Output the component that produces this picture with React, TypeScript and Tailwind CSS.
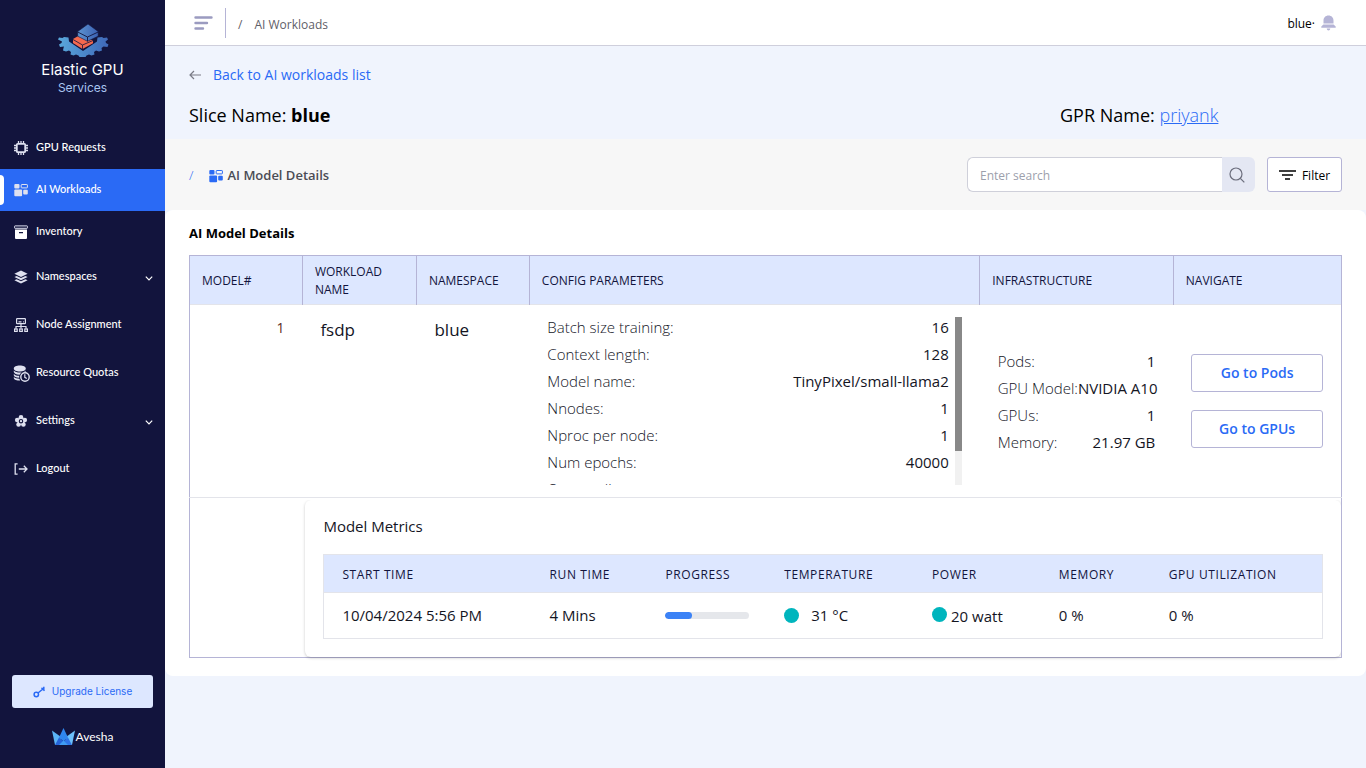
import type { ReactNode } from "react";

type NavItem = {
  label: string;
  icon: ReactNode;
  active?: boolean;
  expandable?: boolean;
  tall?: boolean;
};

function ChipIcon() {
  return (
    <svg viewBox="0 0 14 14" className="size-[14px]" fill="none" stroke="currentColor">
      <rect x="2.8" y="2.8" width="8.4" height="8.4" rx="1" strokeWidth="1.8" />
      <path d="M4.5 0v2.5M7 0v2.5M9.5 0v2.5M4.5 11.5V14M7 11.5V14M9.5 11.5V14M0 4.5h2.5M0 7h2.5M0 9.5h2.5M11.5 4.5H14M11.5 7H14M11.5 9.5H14" strokeWidth="1.3" />
    </svg>
  );
}

function WorkloadIcon({ className = "size-[14px]" }: { className?: string }) {
  return (
    <svg viewBox="0 0 14 14" className={className} fill="currentColor">
      <rect x="0.3" y="1" width="5.2" height="4.6" rx="1" />
      <rect x="7.2" y="1.5" width="6.2" height="3.4" rx="0.6" fill="none" stroke="currentColor" strokeWidth="1" />
      <rect x="0.3" y="6.6" width="7.8" height="6.6" rx="1" />
      <rect x="9.2" y="6.8" width="4.6" height="4.6" rx="1" />
    </svg>
  );
}

function ArchiveIcon() {
  return (
    <svg viewBox="0 0 14 14" className="size-[14px]" fill="currentColor">
      <rect x="0.5" y="0.9" width="13" height="2.4" rx="0.6" fill="none" stroke="currentColor" strokeWidth="1" />
      <path fill="#ffffff" fillRule="evenodd" d="M1 4.4h12V13a1 1 0 0 1-1 1H2a1 1 0 0 1-1-1zM5 7v1.2h4V7z" />
    </svg>
  );
}

function LayersIcon() {
  return (
    <svg viewBox="0 0 14 14" className="size-[14px]" fill="currentColor">
      <path d="M7 .6 13.6 3.8 7 7 .4 3.8z" />
      <path d="M.4 7 2.6 6 7 8.1 11.4 6 13.6 7 7 10.2z" />
      <path d="M.4 10.2 2.6 9.2 7 11.3 11.4 9.2 13.6 10.2 7 13.4z" />
    </svg>
  );
}

function NodesIcon() {
  return (
    <svg viewBox="0 0 14 14" className="size-[14px]" fill="none" stroke="currentColor" strokeWidth="1.2">
      <rect x="2.6" y="0.6" width="8.8" height="5" rx="0.6" />
      <path d="M4.5 3.8h3M9 3.8h.8M7 5.6v5M2 10.8V8.5h10v2.3" />
      <rect x="0.6" y="11" width="2.6" height="2.4" />
      <rect x="5.7" y="11" width="2.6" height="2.4" />
      <rect x="10.8" y="11" width="2.6" height="2.4" />
    </svg>
  );
}

function QuotaIcon() {
  return (
    <svg viewBox="0 0 17 17" className="size-[17px]" fill="currentColor">
      <path d="M.8 3.4C.8 1.6 3.4.4 6.8.4s6 1.2 6 3-2.6 3-6 3-6-1.2-6-3z" />
      <path d="M.8 5.4c1.2 1.5 3.4 2.1 6 2.1s4.800-.6 6-2.100v1.300c-3.200-.2-5.200 1-6.200 3-3.200 0-5.400-1-5.800-2.600z" />
      <path d="M.8 8.900c1.200 1.300 3 1.900 5.400 1.900v1.900C3.200 12.600 1 11.700.8 10.300z" />
      <path d="M.8 12c1.200 1 3 1.600 5.500 1.700l.9 1.800C3.600 15.500 1 14.600.8 13.200z" />
      <circle cx="12" cy="12" r="4.2" fill="none" stroke="currentColor" strokeWidth="1.4" />
      <path d="M11.8 9.3v3l2 1.3" fill="none" stroke="currentColor" strokeWidth="1.2" />
    </svg>
  );
}

function SettingsIcon() {
  return (
    <svg viewBox="0 0 14 14" className="size-[14px]" fill="currentColor">
      <circle cx="7" cy="3.2" r="2.3" />
      <circle cx="3.2" cy="6" r="2.3" />
      <circle cx="10.8" cy="6" r="2.3" />
      <circle cx="4.6" cy="10.4" r="2.3" />
      <circle cx="9.4" cy="10.4" r="2.3" />
      <circle cx="7" cy="7.2" r="3.4" />
      <circle cx="7" cy="7.2" r="1.7" fill="none" stroke="#12143d" strokeWidth="1.1" />
    </svg>
  );
}

function LogoutIcon() {
  return (
    <svg viewBox="0 0 14 14" className="size-[14px]" fill="none" stroke="currentColor" strokeWidth="1.3">
      <path d="M3.6 1.8H1.2v10.4h2.4M4.8 7h8M9.8 3.8 13 7l-3.2 3.2" />
    </svg>
  );
}

function ChevronIcon() {
  return (
    <svg viewBox="0 0 8 8" className="mt-[2px] size-2" fill="none" stroke="currentColor" strokeWidth="1.2">
      <path d="M.8 2.6 4 5.8l3.2-3.2" />
    </svg>
  );
}

function ElasticLogo() {
  return (
    <svg viewBox="0 0 52 34" className="h-[34px] w-[52px]">
      <defs>
        <linearGradient id="gear" x1="0" x2="1">
          <stop offset="0" stopColor="#5aa9dc" />
          <stop offset="1" stopColor="#3f68b8" />
        </linearGradient>
        <linearGradient id="slab" x1="0" x2="1">
          <stop offset="0" stopColor="#5d93d0" />
          <stop offset="1" stopColor="#3b62b3" />
        </linearGradient>
      </defs>
      <path
        fill="url(#gear)"
        d="M2 13.5 5.5 14 7 13l4.5.5.5 4L26 27l14-9.5.5-4L45 13l1.5 1 3.5-.5 1 2-2.5 2 .5 1.5 2.5 1.5-1 2.5-4-.5-2 1.5.5 2.5-3 1-3-1-2 1.5.5 2.5-3 1-2.5-1-2.5 1-1 1.5h-6l-1-1.5-2.5-1-2.5 1-3-1 .5-2.5-2-1.500-3 1-3-1 .500-2.500L7 22.500 3 23l-1-2.500L4.500 19l.500-1.500L1 15.500z"
      />
      <path fill="#f4694e" d="m16 15 7-4 13 5.500v2.700L25.500 25 16 19z" />
      <path fill="none" stroke="#12143d" strokeWidth=".8" d="m16 15.500 9.500 5.500L36 16.500M25.500 21v4" />
      <path fill="url(#slab)" stroke="#12143d" strokeWidth=".6" d="M31 0 20.700 7.500v4.700l9.800 5.100 10.700-5.100V7.500z" />
      <path fill="none" stroke="#12143d" strokeWidth=".9" d="m20.700 8 9.800 5 10.700-5M30.500 13v4.300" />
    </svg>
  );
}

function AveshaLogo() {
  return (
    <svg viewBox="0 0 23 17" className="h-[17px] w-[23px]">
      <path fill="#5ab4f6" d="M0 2.5 9 9l-1 8H3z" />
      <path fill="#6cc0fa" d="M23 2.5 14 9l1 8h5z" />
      <path fill="#2f86ee" d="m11.5 0 4.5 9.5-4.5 4-4.5-4z" />
      <path fill="#2563d8" d="m7 9.5 4.5 4L8 17H3z" />
      <path fill="#2f74e6" d="m16 9.5-4.5 4L15 17h5z" />
      <path fill="#3f9bf2" d="M11.5 12.5 16 17H7z" />
    </svg>
  );
}

const navItems: NavItem[] = [
  { label: "GPU Requests", icon: <ChipIcon /> },
  { label: "AI Workloads", icon: <WorkloadIcon />, active: true },
  { label: "Inventory", icon: <ArchiveIcon /> },
  { label: "Namespaces", icon: <LayersIcon />, expandable: true, tall: true },
  { label: "Node Assignment", icon: <NodesIcon />, tall: true },
  { label: "Resource Quotas", icon: <QuotaIcon />, tall: true },
  { label: "Settings", icon: <SettingsIcon />, expandable: true, tall: true },
  { label: "Logout", icon: <LogoutIcon />, tall: true },
];

const configParams = [
  ["Batch size training:", "16"],
  ["Context length:", "128"],
  ["Model name:", "TinyPixel/small-llama2"],
  ["Nnodes:", "1"],
  ["Nproc per node:", "1"],
  ["Num epochs:", "40000"],
  ["Output dir:", ""],
];

const infrastructure = [
  ["Pods:", "1"],
  ["GPU Model:", "NVIDIA A10"],
  ["GPUs:", "1"],
  ["Memory:", "21.97 GB"],
];

const modelColumns = [
  { label: "Model#", width: "w-[9.8%]" },
  { label: "Workload Name", width: "w-[9.9%]" },
  { label: "Namespace", width: "w-[9.8%]" },
  { label: "Config Parameters", width: "w-[39.1%]" },
  { label: "Infrastructure", width: "w-[16.8%]" },
  { label: "Navigate", width: "w-[14.6%]" },
];

const metricColumns = [
  { label: "Start Time", width: "w-[20.8%]" },
  { label: "Run Time", width: "w-[11.6%]" },
  { label: "Progress", width: "w-[11.9%]" },
  { label: "Temperature", width: "w-[14.8%]" },
  { label: "Power", width: "w-[12.7%]" },
  { label: "Memory", width: "w-[11%]" },
  { label: "GPU Utilization", width: "w-[17.2%]" },
];

function Sidebar() {
  return (
    <aside className="flex w-[165px] shrink-0 flex-col bg-[#12143d] text-white">
      <div className="flex h-[127px] flex-col items-center pt-6">
        <ElasticLogo />
        <p className="mt-[2px] font-['Inter',sans-serif] text-[15px] leading-5">Elastic GPU</p>
        <p className="font-['Inter',sans-serif] text-xs leading-4 text-[#a9c4f0]">Services</p>
      </div>
      <nav>
        <ul>
          {navItems.map((item) => (
            <li key={item.label}>
              <a
                href="#"
                className={`relative flex items-center px-3 font-['Lato','Open_Sans',sans-serif] text-[11px] font-medium ${
                  item.tall ? "h-12" : "h-[42px]"
                } ${item.active ? "bg-[#2a6af5]" : ""}`}
              >
                {item.active && (
                  <span className="absolute top-[6px] left-0 h-[30px] w-1 rounded-r bg-white" />
                )}
                <span className="flex w-[18px] justify-center text-[#dfe1f0]">{item.icon}</span>
                <span className="ml-[6px] pb-[2px]">{item.label}</span>
                {item.expandable && (
                  <span className="ml-auto">
                    <ChevronIcon />
                  </span>
                )}
              </a>
            </li>
          ))}
        </ul>
      </nav>
      <div className="mt-auto flex flex-col items-center px-3 pb-[23px]">
        <button
          type="button"
          className="flex h-[33px] w-full items-center justify-center gap-[6px] rounded-[3px] bg-[#dde7ff] font-['Inter',sans-serif] text-[10px] text-[#2a6af5]"
        >
          <svg viewBox="0 0 13 12" className="h-3 w-[13px]" fill="none" stroke="currentColor" strokeWidth="1.5">
            <circle cx="3.3" cy="8.5" r="2.2" />
            <path d="m5 7 5.5-4.5M8.5 1.8l3 3M10.8.8v3.500" />
          </svg>
          Upgrade License
        </button>
        <div className="mt-5 flex items-center">
          <AveshaLogo />
          <span className="ml-px font-['Lato',sans-serif] text-xs leading-4">Avesha</span>
        </div>
      </div>
    </aside>
  );
}

function TopBar() {
  return (
    <header className="flex h-[46px] items-center border-b border-[#cfcfdc] bg-white pr-[30px] pl-[29px]">
      <button type="button" aria-label="Toggle menu" className="text-[#9b9bc0]">
        <svg viewBox="0 0 19 14" className="h-[14px] w-[19px]" fill="none" stroke="currentColor" strokeWidth="2.4" strokeLinecap="round">
          <path d="M1.5 1.5h16M1.5 7h11.5M1.5 12.5h7.5" />
        </svg>
      </button>
      <span className="ml-3 h-[30px] w-px bg-[#b5b4d6]" />
      <div className="flex gap-3 pt-1 pl-3 text-xs font-medium text-[#5f6068]">
        <span>/</span>
        <span>AI Workloads</span>
      </div>
      <span className="ml-auto pt-[2px] text-xs text-black">blue·</span>
      <button type="button" aria-label="Notifications" className="ml-[6px] text-[#b5b4d6]">
        <svg viewBox="0 0 15 16" className="h-4 w-[15px]" fill="currentColor">
          <path d="M7.5.5c3 0 5 2.2 5 5.2v2.8h-10V5.700c0-3 2-5.200 5-5.200zM2.400 9.400h10.200l2.100 2.200v1.200H.3v-1.200zM5.700 13.600h3.600c-.2 1.300-.8 2-1.800 2s-1.600-.7-1.800-2z" />
        </svg>
      </button>
    </header>
  );
}

function PairList({ rows }: { rows: string[][] }) {
  return (
    <dl className="flex flex-col gap-[7px] text-[15px] leading-5 text-[#14151f]">
      {rows.map(([name, value]) => (
        <div key={name} className="flex justify-between whitespace-nowrap">
          <dt className="font-light">{name}</dt>
          <dd className="font-medium">{value}</dd>
        </div>
      ))}
    </dl>
  );
}

function MetricsTable() {
  return (
    <table className="w-full table-fixed border-collapse border border-[#e3e4ea] text-left">
      <thead className="bg-[#dde7ff]">
        <tr className="h-[38px] border-b border-[#e3e4ea]">
          {metricColumns.map((col) => (
            <th key={col.label} className={`${col.width} pt-[2px] pl-[18px] text-xs font-medium tracking-wider whitespace-nowrap text-[#12143d] uppercase`}>
              {col.label}
            </th>
          ))}
        </tr>
      </thead>
      <tbody>
        <tr className="h-[46px] text-[15px] font-medium text-[#14151f]">
          <td className="pl-[18px]">10/04/2024 5:56 PM</td>
          <td className="pl-[18px]">4 Mins</td>
          <td className="pl-[18px]">
            <div className="h-[7px] w-[84px] overflow-hidden rounded-full bg-[#e5e7eb]">
              <div className="h-full w-[32%] rounded-full bg-[#3b82f6]" />
            </div>
          </td>
          <td className="pl-[18px]">
            <span className="flex items-center gap-3">
              <span className="size-[15px] rounded-full bg-[#00b5bd]" />
              31 °C
            </span>
          </td>
          <td className="pl-[18px]">
            <span className="flex items-start gap-1 leading-[18px]">
              <span className="size-[15px] rounded-full bg-[#00b5bd]" />
              20 watt
            </span>
          </td>
          <td className="pl-[18px]">0 %</td>
          <td className="pl-[18px]">0 %</td>
        </tr>
      </tbody>
    </table>
  );
}

function ModelTable() {
  return (
    <table className="w-full table-fixed border-collapse border border-[#b5b4d6]">
      <thead className="bg-[#dde7ff]">
        <tr className="h-[49px]">
          {modelColumns.map((col) => (
            <th
              key={col.label}
              className={`${col.width} border-x border-[#b5b4d6] px-3 pt-[2px] text-left text-xs leading-[18px] font-medium text-[#12143d] uppercase`}
            >
              {col.label}
            </th>
          ))}
        </tr>
      </thead>
      <tbody>
        <tr className="border-y border-[#e3e4ea]">
          <td className="pt-3 pr-[18px] text-right align-top text-sm leading-[22px] text-[#5b2c22]">1</td>
          <td className="pt-3 pl-[18px] align-top text-[17px] leading-[26px] font-medium text-[#14151f]">fsdp</td>
          <td className="pt-3 pl-[18px] align-top text-[17px] leading-[26px] font-medium text-[#14151f]">blue</td>
          <td className="py-3 pr-[18px] pl-[18px]">
            <div className="flex h-[168px] gap-[6px] overflow-hidden">
              <div className="flex-1">
                <PairList rows={configParams} />
              </div>
              <div className="w-[7px] bg-[#f1f1f1]">
                <div className="h-4/5 bg-[#888888]" />
              </div>
            </div>
          </td>
          <td className="px-[18px]">
            <PairList rows={infrastructure} />
          </td>
          <td className="px-[18px]">
            <div className="flex flex-col gap-[18px]">
              <button type="button" className="h-[38px] rounded-[3px] border border-[#b5b4d6] text-sm font-semibold text-[#2a6af5]">
                Go to Pods
              </button>
              <button type="button" className="h-[38px] rounded-[3px] border border-[#b5b4d6] text-sm font-semibold text-[#2a6af5]">
                Go to GPUs
              </button>
            </div>
          </td>
        </tr>
        <tr>
          <td />
          <td colSpan={5} className="pt-[2px] pl-[3px]">
            <div className="rounded-md p-[18px] pt-[15px] shadow-[0_1px_3px_rgba(0,0,0,0.22)] [clip-path:inset(0_0_-6px_-6px)]">
              <h3 className="mb-[17px] text-[15px] leading-[22px] font-medium text-[#14151f]">Model Metrics</h3>
              <MetricsTable />
            </div>
          </td>
        </tr>
      </tbody>
    </table>
  );
}

export default function App() {
  return (
    <div className="flex min-h-screen bg-[#f0f4fd] font-['Open_Sans','Noto_Sans',sans-serif]">
      <Sidebar />
      <div className="min-w-0 flex-1">
        <TopBar />
        <section className="h-[93px] px-6 pt-4">
          <a href="#" className="inline-flex items-center gap-3 text-sm leading-[22px] text-[#2a6af5]">
            <svg viewBox="0 0 12 10" className="h-[10px] w-3" fill="none" stroke="#7a7b86" strokeWidth="1.2">
              <path d="M12 5H1M5 1 1 5l4 4" />
            </svg>
            Back to AI workloads list
          </a>
          <div className="mt-[15px] flex justify-between text-lg leading-7 font-medium text-black">
            <h1>
              Slice Name: <b className="font-bold">blue</b>
            </h1>
            <p className="w-[282px]">
              GPR Name:{" "}
              <a href="#" className="font-light text-[#2a6af5] underline">
                priyank
              </a>
            </p>
          </div>
        </section>
        <section className="flex h-[71px] items-center justify-between bg-[#f7f7f7] px-6">
          <div className="flex items-center pt-[2px] text-[13px] font-semibold text-[#4b4c55]">
            <span className="font-light text-[#2a6af5]">/</span>
            <WorkloadIcon className="mr-1 ml-4 size-[14px] text-[#2a6af5]" />
            AI Model Details
          </div>
          <div className="flex h-[35px] gap-3">
            <form className="flex" onSubmit={(e) => e.preventDefault()}>
              <input
                type="search"
                aria-label="Search"
                placeholder="Enter search"
                className="w-[255px] rounded-l-md border border-r-0 border-[#cfd0da] bg-white px-3 pt-[2px] text-xs outline-none placeholder:text-[#9ca0ac]"
              />
              <button type="submit" aria-label="Search" className="flex w-[33px] items-center justify-center rounded-r-md bg-[#e4e7f3] pr-[3px]">
                <svg viewBox="0 0 16 16" className="size-4" fill="none" stroke="#6b6d7c" strokeWidth="1.2">
                  <circle cx="7" cy="7" r="6" />
                  <path d="m11.3 11.3 4 4" />
                </svg>
              </button>
            </form>
            <button
              type="button"
              className="flex w-[75px] items-center justify-center gap-[6px] rounded-[3px] border border-[#b5b4d6] bg-white text-xs text-black"
            >
              <svg viewBox="0 0 17 10" className="h-[10px] w-[17px]" fill="none" stroke="currentColor" strokeWidth="1.6">
                <path d="M0 1h17M3 5h11M6 9h5" />
              </svg>
              <span className="pt-[2px]">Filter</span>
            </button>
          </div>
        </section>
        <main className="rounded-lg bg-white px-6 pt-[13px] pb-[18px]">
          <h2 className="mb-3 text-[13px] leading-5 font-bold text-black">AI Model Details</h2>
          <ModelTable />
        </main>
      </div>
    </div>
  );
}
